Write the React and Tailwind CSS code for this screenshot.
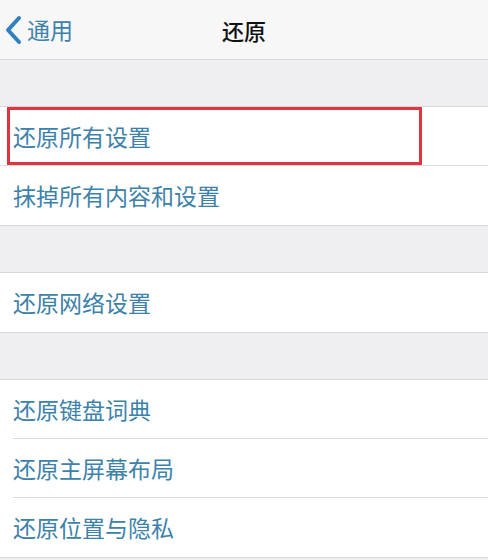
const font = { fontFamily: '"Noto Sans CJK SC", "Noto Sans", sans-serif' }

function Row({ label, inset, last, highlight }) {
  return (
    <div className="relative h-[59px] bg-white flex items-center">
      <span className="pl-[13px] text-[23px] leading-none text-[#3d82aa]">{label}</span>
      {!last && (
        <div className={`absolute bottom-0 right-0 h-px bg-[#dcdce0] ${inset ? 'left-[13px]' : 'left-0'}`} />
      )}
      {highlight && (
        <div className="absolute left-[7px] top-0 w-[415px] h-[58px] border-[3px] border-[#e5333d]" />
      )}
    </div>
  )
}

function Group({ items, inset, highlight }) {
  return (
    <div className="border-y border-[#d8d8dc]">
      {items.map((t, i) => (
        <Row key={t} label={t} inset={inset} last={i === items.length - 1} highlight={highlight && i === 0} />
      ))}
    </div>
  )
}

export default function App() {
  return (
    <div className="w-[488px] h-[560px] overflow-hidden bg-[#efeff2]" style={font}>
      <div className="h-[60px] bg-[#f7f7f7] border-b border-[#d6d6d8] flex items-center relative">
        <div className="flex items-center pl-[4px]">
          <svg width="18" height="30" viewBox="0 0 18 30" className="mr-[5px]">
            <path d="M15 3 L4 15 L15 27" fill="none" stroke="#2f80c2" strokeWidth="4" strokeLinecap="round" strokeLinejoin="round" />
          </svg>
          <span className="text-[23px] leading-none text-[#3d82aa]">通用</span>
        </div>
        <span className="absolute left-0 right-0 text-center text-[22px] leading-none font-medium text-[#111]">还原</span>
      </div>
      <div className="h-[46px]" />
      <Group items={['还原所有设置', '抹掉所有内容和设置']} highlight />
      <div className="h-[46px]" />
      <Group items={['还原网络设置']} />
      <div className="h-[46px]" />
      <Group items={['还原键盘词典', '还原主屏幕布局', '还原位置与隐私']} inset />
    </div>
  )
}
